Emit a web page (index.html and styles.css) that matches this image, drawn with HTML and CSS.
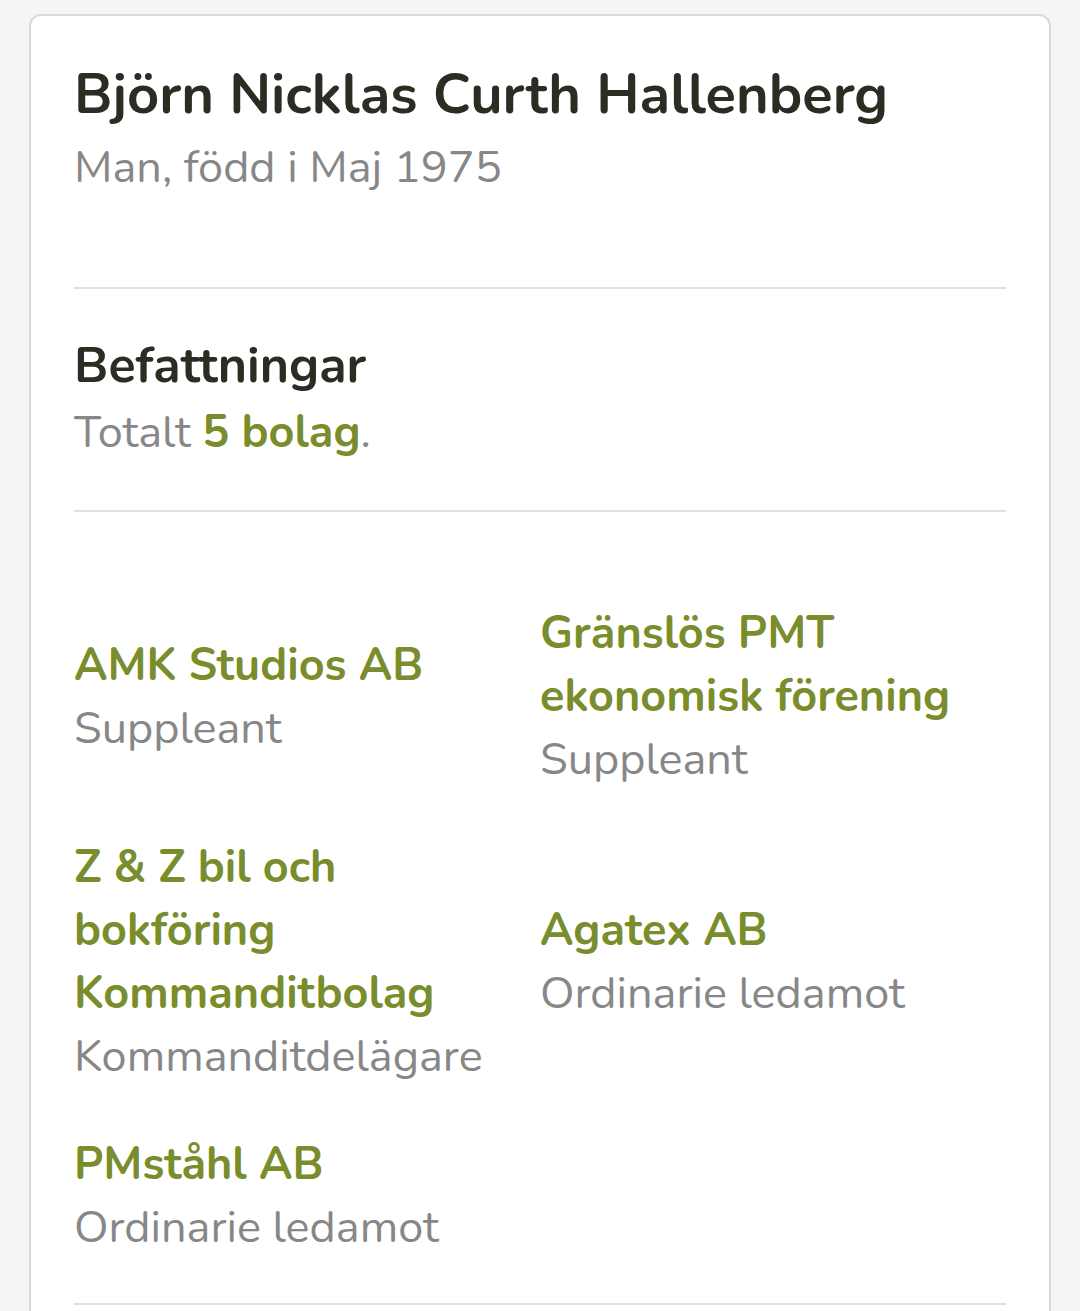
FILE: index.html
```
<!DOCTYPE html>
<html lang="sv">

<head>
    <meta charset="UTF-8">
    <meta name="viewport" content="width=device-width, initial-scale=1.0">
    <title>Björn Nicklas Curth Hallenberg</title>
    <link rel="stylesheet" href="styles.css">
</head>

<body>
    <div class="card">
        <div class="person">
            <h1>Björn Nicklas Curth Hallenberg</h1>
            <p class="muted">Man, född i Maj 1975</p>
        </div>

        <div class="summary">
            <h2>Befattningar</h2>
            <p class="muted">Totalt <span class="count">5 bolag</span>.</p>
        </div>

        <!-- Bolag -->
        <div class="companies">
            <div class="company">
                <a href="#" class="company-name">AMK Studios AB</a>
                <div class="muted">Suppleant</div>
            </div>
            <div class="company">
                <a href="#" class="company-name">Gränslös PMT ekonomisk förening</a>
                <div class="muted">Suppleant</div>
            </div>
            <div class="company">
                <a href="#" class="company-name">Z &amp; Z bil och bokföring Kommanditbolag</a>
                <div class="muted">Kommanditdelägare</div>
            </div>
            <div class="company">
                <a href="#" class="company-name">Agatex AB</a>
                <div class="muted">Ordinarie ledamot</div>
            </div>
            <div class="company">
                <a href="#" class="company-name">PMståhl AB</a>
                <div class="muted">Ordinarie ledamot</div>
            </div>
        </div>
    </div>
</body>

</html>
```

FILE: styles.css
```
body {
    margin: 0;
    padding: 14px 29px 0;
    background-color: #f5f5f5;
    font-family: 'Nunito', 'Lato', 'Open Sans', sans-serif;
    font-size: 45px;
    line-height: 63px;
    overflow: hidden;
}

.card {
    background-color: #ffffff;
    border: 2px solid #d9d9d9;
    border-radius: 12px;
    padding: 44px 43px 200px;
}

.person {
    padding-bottom: 88px;
    border-bottom: 2px solid #e2e2e2;
}

.person h1 {
    margin: 0;
    font-size: 56px;
    line-height: 70px;
    font-weight: 700;
    color: #2b2d22;
}

.person .muted {
    margin-top: 6px;
}

.muted {
    margin: 0;
    color: #878787;
}

.summary {
    padding: 42px 0 46px;
    border-bottom: 2px solid #e2e2e2;
}

.summary h2 {
    margin: 0;
    font-size: 50px;
    line-height: 70px;
    font-weight: 700;
    color: #2b2d22;
}

.count {
    font-weight: 700;
    color: #7a8d2c;
}

.companies {
    display: grid;
    grid-template-columns: 1fr 1fr;
    align-items: center;
    row-gap: 45px;
    padding: 90px 0 44px;
    border-bottom: 2px solid #e2e2e2;
}

.company {
    padding-right: 20px;
}

.company-name {
    display: block;
    font-weight: 700;
    color: #7a8d2c;
    text-decoration: none;
}
```
